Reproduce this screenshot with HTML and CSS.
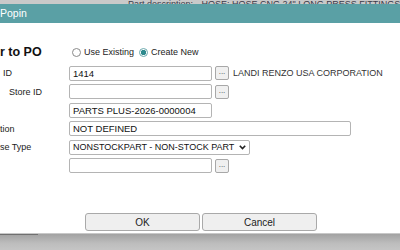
FILE: index.html
```html
<!DOCTYPE html>
<html lang="en">
<head>
    <meta charset="UTF-8">
    <title>Popin</title>
    <link rel="stylesheet" href="styles.css">
</head>
<body>

    <div class="page-top">
        <span class="desc-label">Part description:</span>
        <span class="desc-value">HOSE: HOSE CNG 24" LONG PRESS FITTINGS</span>
    </div>

    <div class="popin">
        <div class="popin-title">Popin</div>

        <div class="popin-body">
            <div class="head-row">
                <h2>r to PO</h2>
                <label class="radio-label"><input type="radio" name="mode"> Use Existing</label>
                <label class="radio-label"><input type="radio" name="mode" checked> Create New</label>
            </div>

            <form class="form-grid">
                <div class="form-row">
                    <label class="field-label indent-3">ID</label>
                    <input type="text" class="field" value="1414">
                    <button type="button" class="pick-btn">...</button>
                    <span class="vendor-name">LANDI RENZO USA CORPORATION</span>
                </div>
                <div class="form-row">
                    <label class="field-label indent-9">Store ID</label>
                    <input type="text" class="field" value="">
                    <button type="button" class="pick-btn">...</button>
                </div>
                <div class="form-row">
                    <label class="field-label"></label>
                    <input type="text" class="field" value="PARTS PLUS-2026-0000004">
                </div>
                <div class="form-row">
                    <label class="field-label">tion</label>
                    <input type="text" class="field field-wide" value="NOT DEFINED">
                </div>
                <div class="form-row">
                    <label class="field-label">se Type</label>
                    <span class="select-wrap">
                        <select class="field-select">
                            <option>NONSTOCKPART - NON-STOCK PART</option>
                        </select>
                        <svg class="chevron" width="7" height="5" viewBox="0 0 7 5">
                            <path d="M0.8 0.8 L3.5 3.6 L6.2 0.8" fill="none" stroke="#222" stroke-width="1.6"/>
                        </svg>
                    </span>
                </div>
                <div class="form-row">
                    <label class="field-label"></label>
                    <input type="text" class="field" value="">
                    <button type="button" class="pick-btn">...</button>
                </div>
            </form>

            <div class="actions">
                <button type="button" class="action-btn">OK</button>
                <button type="button" class="action-btn">Cancel</button>
            </div>
        </div>
    </div>

    <div class="page-under">
        <div class="under-tab"></div>
    </div>

</body>
</html>
```

FILE: styles.css
```css
body {
    margin: 0;
    padding: 0;
    width: 400px;
    height: 250px;
    overflow: hidden;
    font-family: "Liberation Sans", Arial, sans-serif;
    background-color: #c8c8c8;
}

.page-top {
    height: 4px;
    overflow: hidden;
    background-color: #c9c9c9;
    color: #3c3c4a;
    font-size: 9px;
    line-height: 9px;
    white-space: nowrap;
}

.desc-label {
    display: inline-block;
    margin-top: -5px;
    margin-left: 128px;
    width: 71px;
}

.desc-value {
    display: inline-block;
    margin-top: -5px;
}

.popin {
    background-color: #fff;
}

.popin-title {
    height: 19px;
    line-height: 19px;
    background-color: #5aa0a5;
    color: #fff;
    font-size: 10.5px;
}

.popin-body {
    padding: 20px 0 2px 0;
    color: #222;
    font-size: 9px;
}

.head-row {
    display: flex;
    align-items: center;
    height: 18px;
}

.head-row h2 {
    width: 72px;
    margin: 0;
    font-size: 12.5px;
    font-weight: bold;
    color: #111;
}

.radio-label {
    display: flex;
    align-items: center;
    gap: 3px;
    margin-right: 5px;
}

.radio-label input {
    appearance: none;
    width: 9px;
    height: 9px;
    margin: 0;
    border: 1px solid #8a8a8a;
    border-radius: 50%;
    background-color: #fff;
}

.radio-label input:checked {
    border-color: #6aa9ad;
    background: radial-gradient(circle, #2e8a8e 0 2.4px, #fff 3px);
}

.form-grid {
    margin: 3px 0 0 0;
}

.form-row {
    display: flex;
    align-items: center;
    height: 18.5px;
}

.field-label {
    width: 69px;
    box-sizing: border-box;
}

.indent-3 {
    padding-left: 3px;
}

.indent-9 {
    padding-left: 9px;
}

.field,
.field-select {
    box-sizing: border-box;
    width: 143px;
    height: 15px;
    margin: 0;
    padding: 0 3px;
    border: 1px solid #b4b4b4;
    border-radius: 2px;
    background-color: #fff;
    color: #111;
    font-family: "Liberation Sans", Arial, sans-serif;
    font-size: 9.5px;
}

.field-wide {
    width: 282px;
}

.select-wrap {
    position: relative;
    display: inline-block;
    height: 15px;
}

.field-select {
    appearance: none;
    width: 181px;
    padding: 0 12px 0 3px;
    font-size: 9px;
}

.chevron {
    position: absolute;
    right: 4px;
    top: 5px;
}

.pick-btn {
    display: flex;
    align-items: flex-end;
    justify-content: center;
    box-sizing: border-box;
    width: 14px;
    height: 14px;
    margin: 0 0 0 3px;
    padding: 0 0 3px 0;
    border: 1px solid #a8a8a8;
    border-radius: 2px;
    background-color: #f0f0f0;
    color: #444;
    font-family: "Liberation Sans", Arial, sans-serif;
    font-size: 8px;
    line-height: 8px;
}

.vendor-name {
    margin-left: 4px;
    color: #333;
    font-size: 9px;
}

.actions {
    display: flex;
    gap: 2px;
    margin-top: 38px;
    padding-left: 85px;
}

.action-btn {
    width: 115px;
    height: 18px;
    margin: 0;
    padding: 0;
    border: 1px solid #a9a9a9;
    border-radius: 3px;
    background-color: #efefef;
    color: #222;
    font-family: "Liberation Sans", Arial, sans-serif;
    font-size: 10px;
}

.page-under {
    height: 17px;
    background: linear-gradient(#a2a2a2, #bdbdbd 55%, #c6c6c6);
}

.under-tab {
    width: 38px;
    height: 1px;
    margin-top: 1px;
    background-color: #707070;
}
```
